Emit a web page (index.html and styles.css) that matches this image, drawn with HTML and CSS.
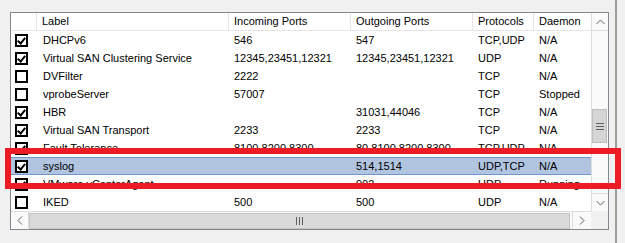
FILE: index.html
```html
<!DOCTYPE html>
<html lang="en">
<head>
    <meta charset="UTF-8">
    <title>Firewall Rules</title>
    <link rel="stylesheet" href="styles.css">
</head>
<body>
    <div class="pane">
        <div class="list-wrap">
            <div class="list">
                <div class="content">
                    <div class="head cols">
                        <div class="hc"></div>
                        <div class="hc">Label</div>
                        <div class="hc">Incoming Ports</div>
                        <div class="hc">Outgoing Ports</div>
                        <div class="hc">Protocols</div>
                        <div class="hc last">Daemon</div>
                    </div>

                    <div class="row cols">
                        <div class="cb-cell"><span class="cb on"></span></div>
                        <div class="c">DHCPv6</div><div class="c">546</div><div class="c">547</div><div class="c">TCP,UDP</div><div class="c">N/A</div>
                    </div>
                    <div class="row cols">
                        <div class="cb-cell"><span class="cb on"></span></div>
                        <div class="c">Virtual SAN Clustering Service</div><div class="c">12345,23451,12321</div><div class="c">12345,23451,12321</div><div class="c">UDP</div><div class="c">N/A</div>
                    </div>
                    <div class="row cols">
                        <div class="cb-cell"><span class="cb"></span></div>
                        <div class="c">DVFilter</div><div class="c">2222</div><div class="c"></div><div class="c">TCP</div><div class="c">N/A</div>
                    </div>
                    <div class="row cols">
                        <div class="cb-cell"><span class="cb"></span></div>
                        <div class="c">vprobeServer</div><div class="c">57007</div><div class="c"></div><div class="c">TCP</div><div class="c">Stopped</div>
                    </div>
                    <div class="row cols">
                        <div class="cb-cell"><span class="cb on"></span></div>
                        <div class="c">HBR</div><div class="c"></div><div class="c">31031,44046</div><div class="c">TCP</div><div class="c">N/A</div>
                    </div>
                    <div class="row cols">
                        <div class="cb-cell"><span class="cb on"></span></div>
                        <div class="c">Virtual SAN Transport</div><div class="c">2233</div><div class="c">2233</div><div class="c">TCP</div><div class="c">N/A</div>
                    </div>
                    <div class="row cols">
                        <div class="cb-cell"><span class="cb on"></span></div>
                        <div class="c">Fault Tolerance</div><div class="c">8100,8200,8300</div><div class="c">80,8100,8200,8300</div><div class="c">TCP,UDP</div><div class="c">N/A</div>
                    </div>
                    <div class="row cols selected">
                        <div class="cb-cell"><span class="cb on"></span></div>
                        <div class="c">syslog</div><div class="c"></div><div class="c">514,1514</div><div class="c">UDP,TCP</div><div class="c">N/A</div>
                    </div>
                    <div class="row cols">
                        <div class="cb-cell"><span class="cb on"></span></div>
                        <div class="c">VMware vCenterAgent</div><div class="c"></div><div class="c">902</div><div class="c">UDP</div><div class="c">Running</div>
                    </div>
                    <div class="row cols">
                        <div class="cb-cell"><span class="cb"></span></div>
                        <div class="c">IKED</div><div class="c">500</div><div class="c">500</div><div class="c">UDP</div><div class="c">N/A</div>
                    </div>
                </div>

                <!-- vertical scrollbar -->
                <div class="vscroll">
                    <div class="sbtn">
                        <svg width="9" height="6" viewBox="0 0 9 6"><polyline points="0.5,5 4.5,1 8.5,5" fill="none" stroke="#606060" stroke-width="1"/></svg>
                    </div>
                    <div class="vtrack">
                        <div class="vthumb">
                            <svg width="8" height="7" viewBox="0 0 8 7"><path d="M0 0.5h8M0 3.5h8M0 6.5h8" stroke="#606060" stroke-width="1"/></svg>
                        </div>
                    </div>
                    <div class="sbtn">
                        <svg width="9" height="6" viewBox="0 0 9 6"><polyline points="0.5,1 4.5,5 8.5,1" fill="none" stroke="#606060" stroke-width="1"/></svg>
                    </div>
                </div>

                <!-- horizontal scrollbar -->
                <div class="hscroll">
                    <div class="sbtn">
                        <svg width="6" height="9" viewBox="0 0 6 9"><polyline points="5,0.5 1,4.5 5,8.5" fill="none" stroke="#606060" stroke-width="1"/></svg>
                    </div>
                    <div class="htrack">
                        <div class="hthumb">
                            <svg width="7" height="8" viewBox="0 0 7 8"><path d="M0.5 0v8M3.5 0v8M6.5 0v8" stroke="#606060" stroke-width="1"/></svg>
                        </div>
                    </div>
                    <div class="sbtn">
                        <svg width="6" height="9" viewBox="0 0 6 9"><polyline points="1,0.5 5,4.5 1,8.5" fill="none" stroke="#606060" stroke-width="1"/></svg>
                    </div>
                </div>
                <div class="corner"></div>
            </div>
        </div>
        <div class="splitter"></div>
    </div>

    <!-- red highlight drawn over the list -->
    <div class="mark"></div>
</body>
</html>
```

FILE: styles.css
```css
body {
    margin: 0;
    background: #f0f0f0;
    font-family: "Liberation Sans", Arial, sans-serif;
    font-size: 11px;
    color: #000;
    overflow: hidden;
}
.pane {
    display: flex;
    height: 243px;
}
.list-wrap {
    padding: 12px 0 0 10px;
}
.list {
    width: 597px;
    height: 216px;
    border: 1px solid #828790;
    background: #fff;
    display: grid;
    grid-template-columns: 580px 17px;
    grid-template-rows: 198px 18px;
}
.content {
    overflow: hidden;
}
.cols {
    display: grid;
    grid-template-columns: 26px 192px 122px 122px 61px 57px;
}
.head {
    height: 17px;
    border-bottom: 1px solid #e5e5e5;
}
.hc {
    border-right: 1px solid #e5e5e5;
    padding-left: 5px;
    line-height: 17px;
    white-space: nowrap;
    overflow: hidden;
}
.hc.last { border-right: none; }
.row {
    height: 18px;
    line-height: 18px;
}
.row .c {
    padding-left: 6px;
    white-space: nowrap;
    overflow: hidden;
}
.row .c:nth-child(n+3) { padding-left: 5px; }
.row.selected {
    background: #b1c5e0;
    box-shadow: inset 0 1px 0 #6d98cd, inset 0 -1px 0 #6d98cd;
}
.cb-cell {
    display: flex;
    align-items: center;
    padding-left: 4px;
}
.cb {
    width: 9px;
    height: 9px;
    border: 2px solid #000;
    background: #fff;
    position: relative;
}
.cb.on::after {
    content: "";
    position: absolute;
    left: 2px;
    top: 0px;
    width: 3px;
    height: 6px;
    border-right: 2px solid #000;
    border-bottom: 2px solid #000;
    transform: rotate(40deg);
}

/* scrollbars */
.vscroll {
    display: flex;
    flex-direction: column;
    background: #fafafa;
    border-left: 1px solid #dcdcdc;
    grid-row: 1;
    grid-column: 2;
}
.sbtn {
    width: 16px;
    height: 17px;
    display: flex;
    align-items: center;
    justify-content: center;
    background: #fafafa;
}
.vscroll .sbtn {
    width: 16px;
}
.vtrack {
    flex: 1;
    border-top: 1px solid #dcdcdc;
    border-bottom: 1px solid #dcdcdc;
}
.vthumb {
    margin: 78px 1px 0 0;
    height: 32px;
    background: #d5d5d5;
    border: 1px solid #bdbdbd;
    display: flex;
    align-items: center;
    justify-content: center;
}
.hscroll {
    display: flex;
    background: #fafafa;
    border-top: 1px solid #dcdcdc;
    grid-row: 2;
    grid-column: 1;
}
.hscroll .sbtn {
    width: 17px;
    height: 16px;
    border-right: 1px solid #dcdcdc;
}
.hscroll .sbtn:last-child {
    border-right: none;
    border-left: 1px solid #dcdcdc;
    margin-right: 1px;
}
.htrack {
    flex: 1;
    padding-right: 2px;
}
.hthumb {
    height: 14px;
    margin-top: 1px;
    background: #dadada;
    border: 1px solid #c4c4c4;
    display: flex;
    align-items: center;
    justify-content: center;
}
.corner {
    background: #f0f0f0;
    grid-row: 2;
    grid-column: 2;
}
.splitter {
    margin-left: 6px;
    width: 2px;
    background: #9d9d9d;
}

/* annotation */
.mark {
    position: absolute;
    left: 5px;
    top: 148px;
    width: 604px;
    height: 29px;
    border: 6px solid #ed1c24;
}
```
